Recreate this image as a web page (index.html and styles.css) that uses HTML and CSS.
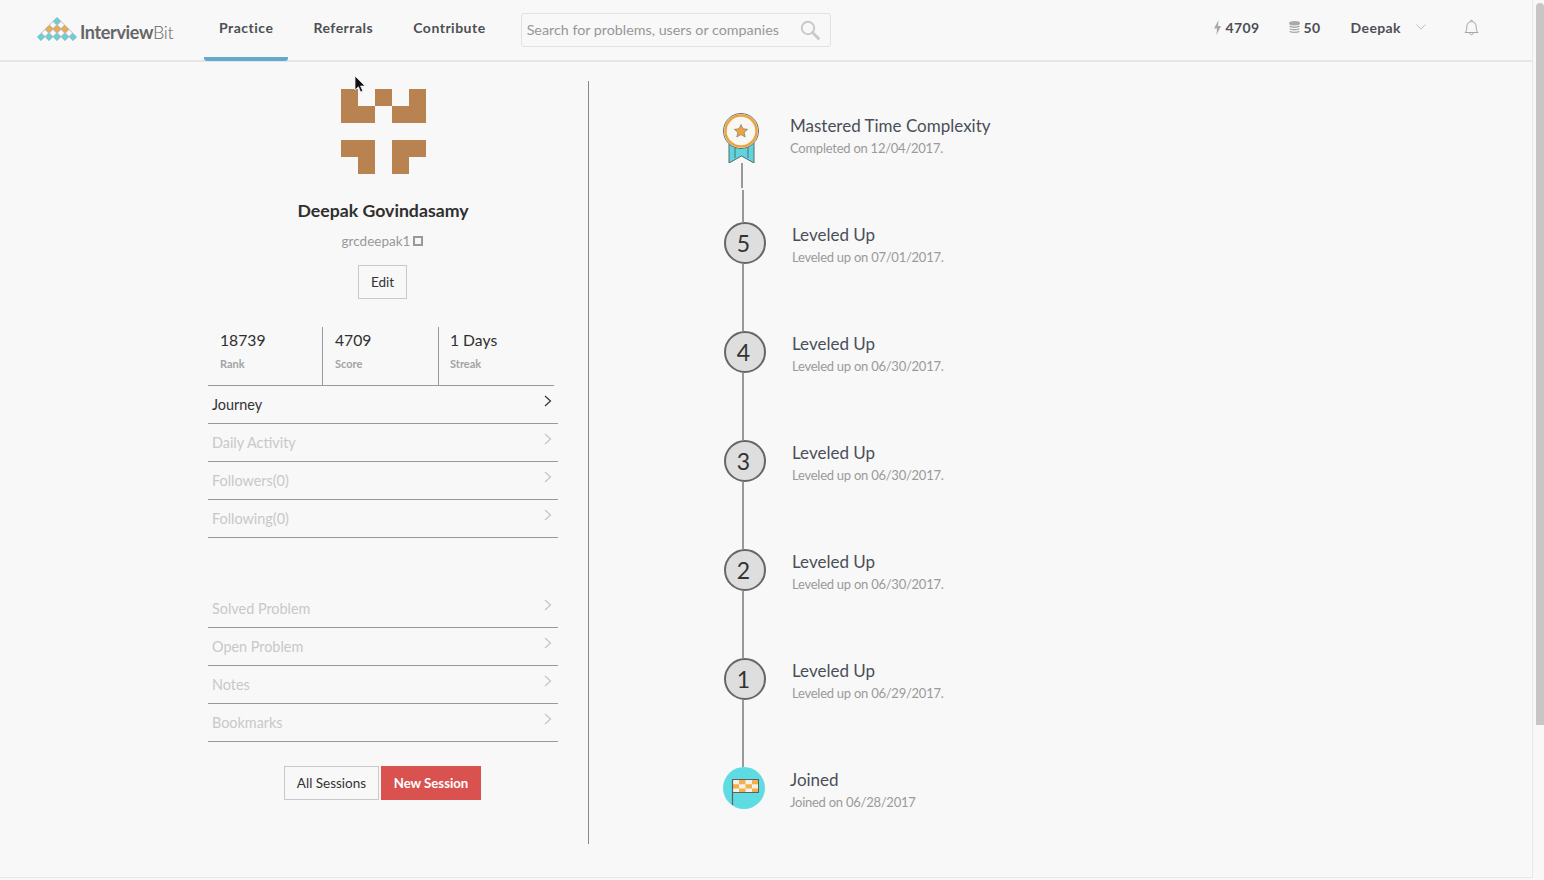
FILE: index.html
```html
<!DOCTYPE html>
<html lang="en">
<head>
    <meta charset="UTF-8">
    <title>InterviewBit - Journey</title>
    <link rel="stylesheet" href="styles.css">
</head>
<body>
    <div class="page">
        <div class="content">
            <header class="topbar">
                <a class="logo">
                    <svg class="logo-mark" width="42" height="26" viewBox="0 0 42 26">
                        <defs>
                            <polygon id="dia" points="0,-3.6 3.6,0 0,3.6 -3.6,0"/>
                        </defs>
                        <use href="#dia" x="20" y="5" class="dia-teal"/>
                        <use href="#dia" x="16" y="9" class="dia-white"/>
                        <use href="#dia" x="24" y="9" class="dia-white"/>
                        <use href="#dia" x="12" y="13" class="dia-orange"/>
                        <use href="#dia" x="20" y="13" class="dia-orange"/>
                        <use href="#dia" x="28" y="13" class="dia-orange"/>
                        <use href="#dia" x="8" y="17" class="dia-white"/>
                        <use href="#dia" x="16" y="17" class="dia-white"/>
                        <use href="#dia" x="24" y="17" class="dia-white"/>
                        <use href="#dia" x="32" y="17" class="dia-white"/>
                        <use href="#dia" x="4" y="21" class="dia-teal"/>
                        <use href="#dia" x="12" y="21" class="dia-teal"/>
                        <use href="#dia" x="20" y="21" class="dia-teal"/>
                        <use href="#dia" x="28" y="21" class="dia-teal"/>
                        <use href="#dia" x="36" y="21" class="dia-teal"/>
                    </svg>
                    <span class="logo-text">Interview<span class="logo-light">Bit</span></span>
                </a>
                <nav class="nav">
                    <a class="nav-tab active">Practice</a>
                    <a class="nav-tab">Referrals</a>
                    <a class="nav-tab">Contribute</a>
                </nav>
                <div class="search">
                    <span class="search-text">Search for problems, users or companies</span>
                    <svg width="20" height="20" viewBox="0 0 20 20" fill="none" stroke="#c9c9c9">
                        <circle cx="8" cy="8" r="6.2" stroke-width="2"/>
                        <path d="M12.5 12.5 L18.5 18.5" stroke-width="2.8" stroke-linecap="round"/>
                    </svg>
                </div>
                <div class="top-right">
                    <span class="top-stat stat-score">
                        <svg width="7" height="15" viewBox="0 0 7 15"><path d="M4.5 0 L0 8.5 H3 L2.5 15 L7 6 H4 Z" fill="#a9a9a9"/></svg>
                        4709
                    </span>
                    <span class="top-stat stat-coins">
                        <svg width="11" height="13" viewBox="0 0 11 13" fill="none" stroke="#a9a9a9" stroke-width="1.4">
                            <ellipse cx="5.5" cy="2.2" rx="4.8" ry="1.5" fill="#a9a9a9"/>
                            <path d="M.7 5 C2 6.6 9 6.6 10.3 5 M.7 7.6 C2 9.2 9 9.2 10.3 7.6 M.7 10.2 C2 11.8 9 11.8 10.3 10.2"/>
                        </svg>
                        50
                    </span>
                    <span class="top-user">Deepak</span>
                    <svg class="top-caret" width="10" height="6" viewBox="0 0 10 6" fill="none" stroke="#bdbdbd"><path d="M.5 .5 L5 5.2 L9.5 .5"/></svg>
                    <svg class="top-bell" width="15" height="17" viewBox="0 0 15 17" fill="none" stroke="#a6a6a6">
                        <path d="M1 13.5 C2.6 12 2.7 10.5 2.8 8 C2.9 4.5 4.6 2.6 7.5 2.6 C10.4 2.6 12.1 4.5 12.2 8 C12.3 10.5 12.4 12 14 13.5 Z"/>
                        <path d="M6.5 2.4 C6.6 .8 8.4 .8 8.5 2.4 M5.6 13.8 C5.8 16.4 9.2 16.4 9.4 13.8"/>
                    </svg>
                </div>
            </header>

            <main class="main">
                <section class="profile">
                    <svg class="avatar" width="85" height="85" viewBox="0 0 5 5" fill="#b98251" shape-rendering="crispEdges">
                        <rect x="0" y="0" width="1" height="2"/>
                        <rect x="1" y="1" width="1" height="1"/>
                        <rect x="2" y="0" width="1" height="1"/>
                        <rect x="3" y="1" width="1" height="1"/>
                        <rect x="4" y="0" width="1" height="2"/>
                        <rect x="0" y="3" width="2" height="1"/>
                        <rect x="1" y="4" width="1" height="1"/>
                        <rect x="3" y="3" width="2" height="1"/>
                        <rect x="3" y="4" width="1" height="1"/>
                    </svg>
                    <h1 class="name">Deepak Govindasamy</h1>
                    <div class="username">grcdeepak1 <span class="user-box"></span></div>
                    <button class="btn btn-edit">Edit</button>

                    <div class="stats">
                        <div class="stat">
                            <div class="stat-value">18739</div>
                            <div class="stat-label">Rank</div>
                        </div>
                        <div class="stat">
                            <div class="stat-value">4709</div>
                            <div class="stat-label">Score</div>
                        </div>
                        <div class="stat">
                            <div class="stat-value">1 Days</div>
                            <div class="stat-label">Streak</div>
                        </div>
                    </div>

                    <ul class="menu">
                        <li class="menu-item current">Journey<svg class="chev" width="8" height="12" viewBox="0 0 8 12"><path d="M1 1 L6.5 6 L1 11"/></svg></li>
                        <li class="menu-item">Daily Activity<svg class="chev" width="8" height="12" viewBox="0 0 8 12"><path d="M1 1 L6.5 6 L1 11"/></svg></li>
                        <li class="menu-item">Followers(0)<svg class="chev" width="8" height="12" viewBox="0 0 8 12"><path d="M1 1 L6.5 6 L1 11"/></svg></li>
                        <li class="menu-item">Following(0)<svg class="chev" width="8" height="12" viewBox="0 0 8 12"><path d="M1 1 L6.5 6 L1 11"/></svg></li>
                    </ul>

                    <ul class="menu menu-second">
                        <li class="menu-item">Solved Problem<svg class="chev" width="8" height="12" viewBox="0 0 8 12"><path d="M1 1 L6.5 6 L1 11"/></svg></li>
                        <li class="menu-item">Open Problem<svg class="chev" width="8" height="12" viewBox="0 0 8 12"><path d="M1 1 L6.5 6 L1 11"/></svg></li>
                        <li class="menu-item">Notes<svg class="chev" width="8" height="12" viewBox="0 0 8 12"><path d="M1 1 L6.5 6 L1 11"/></svg></li>
                        <li class="menu-item">Bookmarks<svg class="chev" width="8" height="12" viewBox="0 0 8 12"><path d="M1 1 L6.5 6 L1 11"/></svg></li>
                    </ul>

                    <div class="session-btns">
                        <button class="btn btn-all">All Sessions</button>
                        <button class="btn btn-new">New Session</button>
                    </div>
                </section>

                <section class="timeline">
                    <div class="tl-item tl-medal">
                        <div class="tl-marker">
                            <svg width="36" height="50" viewBox="0 0 36 50">
                                <path d="M6 30 H31 V50 L18.5 43 L6 50 Z" fill="#5fd4dc" stroke="#5b6a6e" stroke-width="1"/>
                                <path d="M12 32 V45 M25 32 V45" stroke="#5b6a6e" stroke-width="1"/>
                                <circle cx="18" cy="18" r="17.5" fill="#f9f7f2" stroke="#6e6e6e" stroke-width="1"/>
                                <circle cx="18" cy="18" r="15.5" fill="#f9f7f2" stroke="#eda33e" stroke-width="2.4"/>
                                <path d="M18 11.5 L20 15.8 L24.7 16.3 L21.2 19.4 L22.2 24 L18 21.6 L13.8 24 L14.8 19.4 L11.3 16.3 L16 15.8 Z" fill="#eda33e" stroke="#6e6e6e" stroke-width=".6"/>
                            </svg>
                            <div class="tl-line tl-line-short"></div>
                            <div class="tl-line tl-line-rest"></div>
                        </div>
                        <div class="tl-text">
                            <div class="tl-title">Mastered Time Complexity</div>
                            <div class="tl-sub">Completed on 12/04/2017.</div>
                        </div>
                    </div>

                    <div class="tl-item tl-level">
                        <div class="tl-marker"><div class="tl-num">5</div><div class="tl-line"></div></div>
                        <div class="tl-text">
                            <div class="tl-title">Leveled Up</div>
                            <div class="tl-sub">Leveled up on 07/01/2017.</div>
                        </div>
                    </div>
                    <div class="tl-item tl-level">
                        <div class="tl-marker"><div class="tl-num">4</div><div class="tl-line"></div></div>
                        <div class="tl-text">
                            <div class="tl-title">Leveled Up</div>
                            <div class="tl-sub">Leveled up on 06/30/2017.</div>
                        </div>
                    </div>
                    <div class="tl-item tl-level">
                        <div class="tl-marker"><div class="tl-num">3</div><div class="tl-line"></div></div>
                        <div class="tl-text">
                            <div class="tl-title">Leveled Up</div>
                            <div class="tl-sub">Leveled up on 06/30/2017.</div>
                        </div>
                    </div>
                    <div class="tl-item tl-level">
                        <div class="tl-marker"><div class="tl-num">2</div><div class="tl-line"></div></div>
                        <div class="tl-text">
                            <div class="tl-title">Leveled Up</div>
                            <div class="tl-sub">Leveled up on 06/30/2017.</div>
                        </div>
                    </div>
                    <div class="tl-item tl-level">
                        <div class="tl-marker"><div class="tl-num">1</div><div class="tl-line"></div></div>
                        <div class="tl-text">
                            <div class="tl-title">Leveled Up</div>
                            <div class="tl-sub">Leveled up on 06/29/2017.</div>
                        </div>
                    </div>

                    <div class="tl-item tl-joined">
                        <div class="tl-marker">
                            <svg width="42" height="42" viewBox="0 0 42 42">
                                <circle cx="21" cy="21" r="21" fill="#5fdce2"/>
                                <rect x="9.5" y="12.5" width="26" height="13" fill="#f4f1ea"/>
                                <path d="M16 13 h6.5 v4.3 h-6.5 Z M29 13 h6.5 v4.3 h-6.5 Z M9.5 17.3 h6.5 v4.3 h-6.5 Z M22.5 17.3 h6.5 v4.3 h-6.5 Z M16 21.6 h6.5 v4.3 h-6.5 Z M29 21.6 h6.5 v4.3 h-6.5 Z" fill="#f3b04a"/>
                                <rect x="9.5" y="12.5" width="26" height="13" fill="none" stroke="#5f5f5f"/>
                                <path d="M9.5 12.5 V38" stroke="#5f5f5f" stroke-width="1.2"/>
                            </svg>
                        </div>
                        <div class="tl-text">
                            <div class="tl-title">Joined</div>
                            <div class="tl-sub">Joined on 06/28/2017</div>
                        </div>
                    </div>
                </section>
            </main>
        </div>
        <div class="scrollbar"><div class="scroll-thumb"></div></div>
    </div>

    <svg class="cursor" width="13" height="19" viewBox="0 0 13 19">
        <path d="M1 1 V15 L4.4 11.8 L6.6 17 L8.8 16 L6.6 11 H11 Z" fill="#111" stroke="#eee" stroke-width=".8"/>
    </svg>
</body>
</html>
```

FILE: styles.css
```css
* {
    box-sizing: border-box;
}
html, body {
    margin: 0;
    height: 880px;
    overflow: hidden;
}
body {
    font-family: "Lato", sans-serif;
    background-color: #f8f8f8;
    color: #333;
    position: relative;
}
.page {
    display: flex;
    height: 880px;
}
.content {
    width: 1533px;
    height: 878px;
    border-right: 1px solid #e8e8e8;
    border-bottom: 1px solid #e8e8e8;
}
.scrollbar {
    flex: 1;
    padding: 3px 0 0 3px;
}
.scroll-thumb {
    height: 722px;
    background-color: #c6c6c6;
    border-radius: 4px 4px 0 0;
}

/* top bar */
.topbar {
    display: flex;
    align-items: center;
    height: 62px;
    padding: 0 53px 0 37px;
    border-bottom: 2px solid #e6e6e6;
}
.logo {
    display: flex;
    align-items: center;
    width: 136px;
    margin-right: 31px;
    margin-top: 4px;
}
.logo-mark {
    flex: none;
    margin-top: -6px;
}
.logo-text {
    font-size: 18px;
    font-weight: 700;
    color: #666;
    margin-left: 1px;
    letter-spacing: -0.35px;
    white-space: nowrap;
}
.logo-light {
    font-weight: 300;
}
.dia-teal {
    fill: #5fd3dc;
    stroke: #8a9a9c;
    stroke-width: .6;
}
.dia-white {
    fill: #fafafa;
    stroke: #8d8d8d;
    stroke-width: .6;
}
.dia-orange {
    fill: #f2ab4b;
    stroke: #9a8a70;
    stroke-width: .6;
}
.nav {
    display: flex;
    gap: 10px;
    height: 61px;
    align-self: flex-start;
}
.nav-tab {
    display: block;
    height: 61px;
    padding: 19px 15px 0;
    font-size: 14px;
    font-weight: 700;
    line-height: 18px;
    letter-spacing: 0.5px;
    color: #4d4f55;
    border-bottom: 4px solid transparent;
    white-space: nowrap;
}
.nav-tab.active {
    border-bottom-color: #64aacb;
    border-radius: 0 0 3px 3px;
}
.search {
    display: flex;
    align-items: center;
    justify-content: space-between;
    width: 310px;
    height: 34px;
    margin-left: 20px;
    margin-top: -1px;
    padding: 0 10px 0 5px;
    border: 1px solid #e2e2e2;
    border-radius: 3px;
}
.search-text {
    font-size: 14.3px;
    color: #979797;
    white-space: nowrap;
}
.top-right {
    display: flex;
    align-items: center;
    margin-left: auto;
    margin-top: -6px;
    font-size: 14px;
    font-weight: 700;
    letter-spacing: 0.4px;
    color: #4d4f55;
}
.top-stat {
    display: flex;
    align-items: center;
    gap: 4px;
    white-space: nowrap;
}
.stat-coins {
    margin-left: 29px;
}
.top-user {
    margin-left: 30px;
}
.top-caret {
    margin-left: 15px;
}
.top-bell {
    margin-left: 38px;
}

/* main */
.main {
    display: flex;
    padding: 19px 0 0 208px;
}
.profile {
    display: flex;
    flex-direction: column;
    align-items: center;
    width: 350px;
    height: 763px;
    padding-top: 8px;
}
.avatar {
    display: block;
}
.name {
    margin: 25px 0 0;
    font-size: 17.7px;
    font-weight: 700;
    line-height: 24px;
    color: #2f2f2f;
    white-space: nowrap;
}
.username {
    display: flex;
    align-items: center;
    gap: 3px;
    margin-top: 8px;
    margin-left: -1px;
    height: 20px;
    font-size: 13.5px;
    color: #999;
}
.user-box {
    display: block;
    width: 10px;
    height: 10px;
    border: 2px solid #999;
}
.btn {
    font-family: inherit;
    font-size: 13.5px;
    height: 34px;
    padding: 0;
    background: transparent;
    border: 1px solid #c9c9c9;
    color: #333;
    cursor: pointer;
}
.btn-edit {
    width: 49px;
    margin-top: 14px;
    margin-left: -1px;
}
.stats {
    display: flex;
    align-self: flex-start;
    width: 346px;
    height: 59px;
    margin-top: 28px;
    border-bottom: 1px solid #999;
}
.stat {
    width: 115px;
    height: 58px;
    padding-left: 12px;
    border-right: 1px solid #999;
}
.stat:nth-child(2) {
    width: 116px;
}
.stat:last-child {
    width: 115px;
    padding-left: 11px;
    border-right: none;
}
.stat-value {
    margin-top: 3px;
    font-size: 15.7px;
    line-height: 20px;
    color: #2f2f2f;
    white-space: nowrap;
}
.stat-label {
    margin-top: 7px;
    font-size: 11px;
    font-weight: 700;
    line-height: 14px;
    color: #a3a3a3;
}
.menu {
    list-style: none;
    width: 350px;
    margin: 0;
    padding: 0;
}
.menu-second {
    margin-top: 52px;
}
.menu-item {
    display: flex;
    justify-content: space-between;
    height: 38px;
    padding: 0 6px 0 4px;
    border-bottom: 1px solid #999;
    font-size: 14.4px;
    line-height: 38px;
    color: #c8c8c8;
}
.menu-item.current {
    color: #333;
}
.chev {
    margin-top: 9px;
    fill: none;
    stroke: #c4c4c4;
    stroke-width: 1.2;
}
.current .chev {
    stroke: #333;
}
.session-btns {
    display: flex;
    gap: 2px;
    margin-top: 24px;
    margin-left: -1px;
}
.btn-all {
    width: 95px;
}
.btn-new {
    width: 100px;
    font-size: 13.2px;
    font-weight: 700;
    color: #fff;
    background-color: #da524f;
    border-color: #da524f;
}

/* timeline */
.timeline {
    width: 943px;
    height: 763px;
    margin-left: 30px;
    padding: 32px 0 0 134px;
    border-left: 1px solid #888;
}
.tl-item {
    display: flex;
    height: 109px;
}
.tl-marker {
    display: flex;
    flex-direction: column;
    align-items: flex-start;
    flex: none;
    width: 42px;
    height: 109px;
}
.tl-line {
    flex: 1;
    width: 2px;
    margin-left: 18px;
    background-color: #999;
}
.tl-text {
    margin-left: 25px;
}
.tl-title {
    font-size: 17px;
    line-height: 26px;
    color: #4a4f57;
    white-space: nowrap;
}
.tl-sub {
    font-size: 13px;
    letter-spacing: -0.25px;
    line-height: 18px;
    color: #9a9a9a;
    white-space: nowrap;
}
.tl-medal .tl-line {
    flex: none;
}
.tl-medal svg {
    flex: none;
}
.tl-line-short {
    height: 25px;
}
.tl-medal .tl-line-rest {
    height: 32px;
    margin-top: 2px;
    margin-left: 19px;
}
.tl-level .tl-marker {
    margin-left: 1px;
}
.tl-level .tl-text {
    margin-left: 26px;
}
.tl-num {
    flex: none;
    width: 42px;
    height: 42px;
    padding-right: 3px;
    border: 2px solid #666;
    border-radius: 50%;
    background-color: #dedede;
    text-align: center;
    font-size: 23px;
    line-height: 38px;
    color: #333;
}
.tl-joined .tl-marker {
    height: 42px;
}

.cursor {
    position: absolute;
    left: 354px;
    top: 75px;
}
```
